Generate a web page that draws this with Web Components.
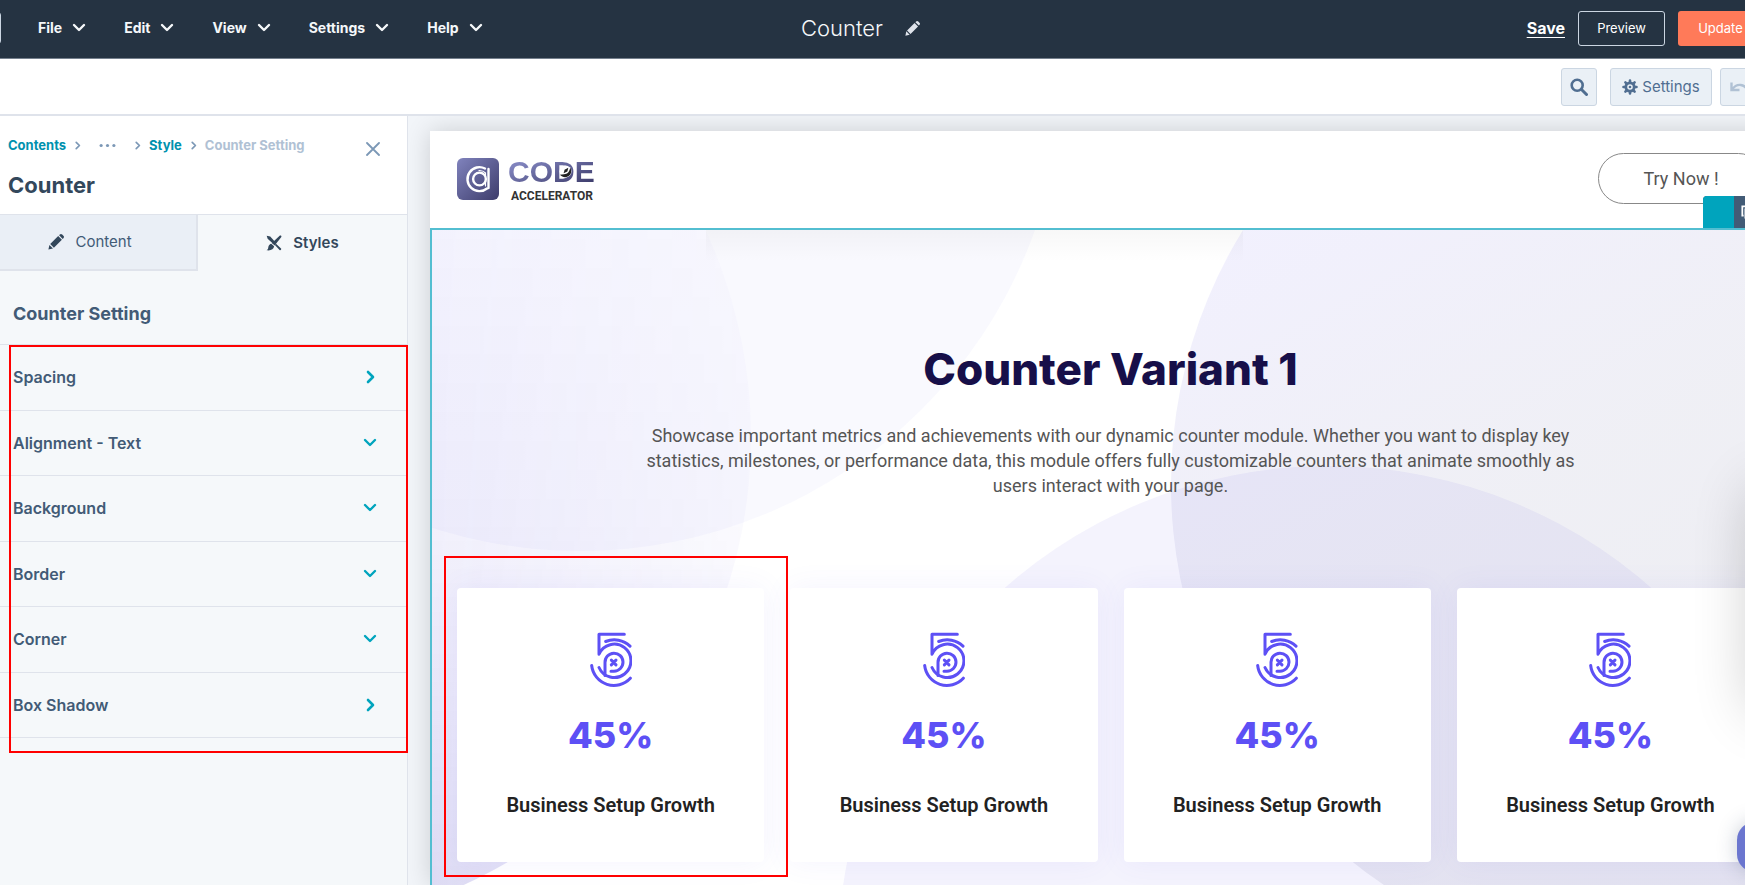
<!DOCTYPE html>
<html lang="en">
<head>
<meta charset="utf-8">
<title>Counter</title>
<style>
    html, body { margin:0; height:100% }
    body {
        font-family: Inter, "Liberation Sans", sans-serif;
        color: #33475b;
        overflow: hidden;
    }
    editor-app { height: 100vh }
</style>
</head>
<body>

<editor-app>
    <editor-navbar slot="navbar" page-name="Counter">
        <nav-menu>File</nav-menu>
        <nav-menu>Edit</nav-menu>
        <nav-menu>View</nav-menu>
        <nav-menu>Settings</nav-menu>
        <nav-menu>Help</nav-menu>
    </editor-navbar>

    <editor-toolbar slot="toolbar"></editor-toolbar>

    <module-sidebar slot="sidebar" heading="Counter" section="Counter Setting">
        <setting-row icon="right">Spacing</setting-row>
        <setting-row icon="down">Alignment - Text</setting-row>
        <setting-row icon="down">Background</setting-row>
        <setting-row icon="down">Border</setting-row>
        <setting-row icon="down">Corner</setting-row>
        <setting-row icon="right">Box Shadow</setting-row>
    </module-sidebar>

    <site-preview>
        <site-header slot="header"></site-header>
        <counter-section heading="Counter Variant 1">
            <span slot="text">Showcase important metrics and achievements with our dynamic counter module. Whether you want to display key statistics, milestones, or performance data, this module offers fully customizable counters that animate smoothly as users interact with your page.</span>
            <counter-card value="45%" marked>Business Setup Growth</counter-card>
            <counter-card value="45%">Business Setup Growth</counter-card>
            <counter-card value="45%">Business Setup Growth</counter-card>
            <counter-card value="45%">Business Setup Growth</counter-card>
        </counter-section>
    </site-preview>
</editor-app>

<script>
const ICONS = {
    down: '<svg viewBox="0 0 14 14"><path d="M2 4l5 5 5-5" fill="none" stroke="currentColor" stroke-width="2.4" stroke-linecap="round" stroke-linejoin="round"/></svg>',
    right: '<svg viewBox="0 0 14 14"><path d="M5 2l5 5-5 5" fill="none" stroke="currentColor" stroke-width="2.6" stroke-linecap="round" stroke-linejoin="round"/></svg>',
    close: '<svg viewBox="0 0 14 14"><path d="M1 1l12 12M13 1L1 13" fill="none" stroke="currentColor" stroke-width="1.8" stroke-linecap="round"/></svg>',
    dots: '<svg viewBox="0 0 16 16"><g fill="currentColor"><circle cx="2" cy="8" r="1.5"/><circle cx="8" cy="8" r="1.5"/><circle cx="14" cy="8" r="1.5"/></g></svg>',
    pencil: '<svg viewBox="0 0 16 16"><path d="M0.4 15.6l1-4.6 3.6 3.6zM2.2 10.1L10.2 2.1l3.7 3.7-8 8zM11.1 1.3l.7-.7c.8-.8 1.7-.7 2.4 0l1.2 1.2c.8.8.8 1.6 0 2.4l-.7.7z" fill="currentColor"/></svg>',
    brush: '<svg viewBox="0 0 17 17"><g fill="currentColor"><path d="M.7.7l3.8 1 5 5.6-2 2L1.8 4z"/><path d="M10.6 9.2l5.4 5.2c.7 1-.6 2.2-1.6 1.5L9.4 10.5z"/><path d="M14.8.6c1-.5 2 .4 1.5 1.5L9.2 11.2 6.3 8.5z"/><path d="M5.6 9.2l3 2.8c-.3 3.6-3.6 4.8-8 4.2 2-.9 1.5-2.2 2-4 .5-1.7 1.6-2.7 3-3z"/></g></svg>',
    search: '<svg viewBox="0 0 18 18"><circle cx="7.2" cy="7.2" r="5.5" fill="none" stroke="currentColor" stroke-width="2.6"/><path d="M11.5 11.5l5 5" stroke="currentColor" stroke-width="3" stroke-linecap="round"/></svg>',
    gear: '<svg viewBox="0 0 16 16"><circle cx="8" cy="8" r="4.2" fill="none" stroke="currentColor" stroke-width="2.8"/><circle cx="8" cy="8" r="1.3" fill="currentColor"/><path d="M8 1.5v2M8 12.5v2M1.5 8h2M12.5 8h2M3.4 3.4l1.4 1.4M11.2 11.2l1.4 1.4M3.4 12.6l1.4-1.4M11.2 4.8l1.4-1.4" stroke="currentColor" stroke-width="2.6" stroke-linecap="round"/></svg>',
    undo: '<svg viewBox="0 0 20 14"><path d="M1.5 2.5v7.5h8M2 9.5c5-7 13-6 16.5 2.5" fill="none" stroke="currentColor" stroke-width="2.4"/></svg>',
    copy: '<svg viewBox="0 0 16 16"><g fill="none" stroke="currentColor" stroke-width="2"><path d="M3 12H1.5V1.5H11V3"/><rect x="5" y="5" width="9.5" height="9.5"/></g></svg>',
    counter: '<svg viewBox="0 0 126 164"><g fill="none" stroke="currentColor" stroke-width="9" stroke-linecap="round" stroke-linejoin="round"><path d="M103 6H27V66A50 50 0 1 1 27 106"/><path d="M45 130V91A27 27 0 1 1 72 117H63"/><path d="M47 28A68 68 0 0 1 120 42M5 100A67 67 0 0 0 121 138"/><path d="M64 84l14 14M78 84l-14 14"/></g></svg>',
    logo: '<svg viewBox="0 0 42 42"><defs><linearGradient id="lg" x1="0" y1="0" x2="1" y2="1"><stop offset="0" stop-color="#8083bd"/><stop offset="1" stop-color="#3d3c6b"/></linearGradient></defs><rect width="42" height="42" rx="6" fill="url(#lg)"/><g fill="none" stroke="#fff" stroke-linecap="round"><path d="M28 10.5A12 12 0 1 0 30 30.5" stroke-width="2.4"/><path d="M31.5 11V30" stroke-width="2.4"/><circle cx="22.5" cy="21" r="6.4" stroke-width="2.4"/><path d="M28.5 15V28M28.5 15A8.5 8.5 0 0 0 22 12.5" stroke-width="1.2"/></g></svg>',
    rocket: '<svg viewBox="0 0 14 14"><circle cx="7" cy="7" r="6.5" fill="#fff"/><path d="M1 10.5C4 14 9 14 12 10.5 14 8 13 4 12 3c-.5 4-3 7-6.500 7z" fill="#222"/><path d="M5 9l1-4 4-2-1 4z" fill="#222"/></svg>'
};

class UiIcon extends HTMLElement {
    connectedCallback() {
        this.attachShadow({ mode: 'open' });
        this.shadowRoot.innerHTML = `
            <style>
                :host { display:inline-block; width:14px; height:14px; flex:none }
                svg { display:block; width:100%; height:100% }
            </style>
            ${ICONS[this.getAttribute('name')]}
        `;
    }
}
customElements.define('ui-icon', UiIcon);

class EditorApp extends HTMLElement {
    connectedCallback() {
        this.attachShadow({ mode: 'open' });
        this.shadowRoot.innerHTML = `
            <style>
                :host {
                    display: flex;
                    flex-direction: column;
                    position: relative;
                    overflow: hidden;
                    background: #fff;
                }
                .main {
                    flex: 1;
                    min-height: 0;
                    display: grid;
                    grid-template-columns: 408px minmax(0, 1fr);
                }
                /* panel docked past the right edge, only its shadow shows */
                .dock {
                    position: absolute;
                    right: -60px;
                    top: 490px;
                    width: 50px;
                    height: 220px;
                    border-radius: 8px;
                    box-shadow: 0 0 60px rgba(0,0,0,.24);
                }
                .chat {
                    position: absolute;
                    right: -42px;
                    bottom: 13px;
                    width: 50px;
                    height: 50px;
                    padding: 0;
                    border: none;
                    border-radius: 18px;
                    background: #6b76cf;
                    box-shadow: 0 0 20px rgba(40,60,90,.25);
                }
            </style>
            <slot name="navbar"></slot>
            <slot name="toolbar"></slot>
            <div class="main">
                <slot name="sidebar"></slot>
                <slot></slot>
            </div>
            <div class="dock"></div>
            <button class="chat" aria-label="Chat"></button>
        `;
    }
}
customElements.define('editor-app', EditorApp);

class NavMenu extends HTMLElement {
    connectedCallback() {
        this.attachShadow({ mode: 'open' });
        this.shadowRoot.innerHTML = `
            <style>
                :host { display:block }
                button {
                    display: flex;
                    align-items: center;
                    gap: 10px;
                    padding: 0;
                    border: none;
                    background: none;
                    color: #f5f8fa;
                    font: 700 14px/20px Inter, sans-serif;
                    cursor: pointer;
                }
            </style>
            <button><slot></slot><ui-icon name="down"></ui-icon></button>
        `;
    }
}
customElements.define('nav-menu', NavMenu);

class EditorNavbar extends HTMLElement {
    connectedCallback() {
        this.attachShadow({ mode: 'open' });
        this.shadowRoot.innerHTML = `
            <style>
                :host {
                    display: grid;
                    grid-template-columns: 1fr auto 1fr;
                    align-items: center;
                    height: 56px;
                    padding: 0 24px 2px 0;
                    border-bottom: 1px solid #75808d;
                    background: #253342;
                    color: #f5f8fa;
                }
                nav { display:flex; align-items:center; gap:38px }
                .exit {
                    width: 37px;
                    height: 32px;
                    margin: 0 -1px 0 -36px;
                    padding: 0;
                    border: 1px solid #cbd6e2;
                    border-radius: 3px;
                    background: none;
                }
                .title { display:flex; align-items:center; gap:22px }
                h1 { margin:0; font-weight:300; font-size:22px; line-height:28px }
                .title ui-icon { width:15px; height:15px; color:#dfe3eb }
                .actions {
                    justify-self: end;
                    display: flex;
                    align-items: center;
                    gap: 13px;
                    margin-right: -42px;
                }
                a { color:#fff; font-weight:700; font-size:16px; text-underline-offset:3px }
                button {
                    height: 35px;
                    border-radius: 3px;
                    font: 400 13px/20px Inter, sans-serif;
                    color: #fff;
                    cursor: pointer;
                }
                .preview { width:87px; padding:0; border:1px solid #cbd6e2; background:none }
                .update { width:85px; padding:0; border:none; background:#ff7a59 }
            </style>
            <nav>
                <button class="exit" aria-label="Exit"></button>
                <slot></slot>
            </nav>
            <div class="title">
                <h1>${this.getAttribute('page-name')}</h1>
                <ui-icon name="pencil"></ui-icon>
            </div>
            <div class="actions">
                <a href="#save">Save</a>
                <button class="preview">Preview</button>
                <button class="update">Update</button>
            </div>
        `;
    }
}
customElements.define('editor-navbar', EditorNavbar);

class EditorToolbar extends HTMLElement {
    connectedCallback() {
        this.attachShadow({ mode: 'open' });
        this.shadowRoot.innerHTML = `
            <style>
                :host {
                    display: flex;
                    justify-content: flex-end;
                    align-items: center;
                    height: 55px;
                    border-bottom: 2px solid #dfe3eb;
                }
                button {
                    display: flex;
                    align-items: center;
                    justify-content: center;
                    gap: 4px;
                    height: 38px;
                    padding: 0 8px;
                    border: 1px solid #cbd6e2;
                    border-radius: 3px;
                    background: #eaf0f6;
                    color: #506e91;
                    font: 400 15px/20px Inter, sans-serif;
                    cursor: pointer;
                }
                .search { width:36px; margin-right:13px }
                .search ui-icon { width:18px; height:18px }
                .settings { width:102px; margin-right:8px }
                .settings ui-icon { width:16px; height:16px }
                .undo { width:39px; margin-right:-14px; color:#b0c1d4 }
                .undo ui-icon { width:20px }
            </style>
            <button class="search" aria-label="Search"><ui-icon name="search"></ui-icon></button>
            <button class="settings"><ui-icon name="gear"></ui-icon>Settings</button>
            <button class="undo" aria-label="Undo"><ui-icon name="undo"></ui-icon></button>
        `;
    }
}
customElements.define('editor-toolbar', EditorToolbar);

class SettingRow extends HTMLElement {
    connectedCallback() {
        this.attachShadow({ mode: 'open' });
        this.shadowRoot.innerHTML = `
            <style>
                :host { display:block; border-bottom:1px solid #dfe3eb }
                button {
                    display: flex;
                    align-items: center;
                    justify-content: space-between;
                    width: 100%;
                    height: 100%;
                    padding: 0 30px 0 13px;
                    border: none;
                    background: none;
                    color: #425b76;
                    font: 600 16px/20px Inter, sans-serif;
                    cursor: pointer;
                }
                ui-icon { color:#00a4bd }
            </style>
            <button><slot></slot><ui-icon name="${this.getAttribute('icon')}"></ui-icon></button>
        `;
    }
}
customElements.define('setting-row', SettingRow);

class ModuleSidebar extends HTMLElement {
    connectedCallback() {
        this.attachShadow({ mode: 'open' });
        this.shadowRoot.innerHTML = `
            <style>
                :host {
                    display: block;
                    border-right: 1px solid #dfe3eb;
                    background: #f5f8fa;
                }
                .head {
                    display: flex;
                    justify-content: space-between;
                    height: 98px;
                    padding: 0 27px 0 8px;
                    border-bottom: 1px solid #dfe3eb;
                    background: #fff;
                }
                .crumbs {
                    display: flex;
                    align-items: center;
                    height: 20px;
                    margin-top: 19px;
                    font-weight: 700;
                    font-size: 13px;
                    line-height: 20px;
                    color: #b0c1d4;
                }
                .crumbs a { color:#0091ae; text-decoration:none }
                .crumbs ui-icon { width:9px; height:9px; margin:0 7px; color:#7c98b6 }
                .crumbs .dots { width:17px; height:17px; margin:0 10px }
                h2 { margin:15px 0 0; font-weight:700; font-size:22px; line-height:30px }
                .close {
                    width: 14px;
                    height: 14px;
                    margin-top: 26px;
                    padding: 0;
                    border: none;
                    background: none;
                    color: #7c98b6;
                }
                .tabs { display:grid; grid-template-columns:198px 1fr; height:56px }
                .tabs button {
                    display: flex;
                    align-items: center;
                    justify-content: center;
                    gap: 11px;
                    padding: 0;
                    border: none;
                    background: none;
                    font: 400 15px/20px Inter, sans-serif;
                    color: #425b76;
                }
                .tabs .idle {
                    padding-right: 16px;
                    border-right: 2px solid #dfe3eb;
                    border-bottom: 2px solid #dfe3eb;
                    background: #eaeff6;
                }
                .tabs .active { font-weight:600; color:#33475b }
                .tabs ui-icon { width:16px; height:16px; color:#33475b }
                h3 { margin:0; padding:30px 13px 17px; font-weight:700; font-size:18px; line-height:26px; color:#425b76 }
                .rows {
                    position: relative;
                    display: grid;
                    grid-auto-rows: 1fr;
                    height: 394px;
                    box-sizing: border-box;
                    border-top: 1px solid #dfe3eb;
                }
                .mark {
                    position: absolute;
                    inset: 0 -1px -15px 9px;
                    border: 2px solid #f00;
                    pointer-events: none;
                }
            </style>
            <div class="head">
                <div>
                    <div class="crumbs">
                        <a href="#contents">Contents</a>
                        <ui-icon name="right"></ui-icon>
                        <ui-icon class="dots" name="dots"></ui-icon>
                        <ui-icon name="right"></ui-icon>
                        <a href="#style">Style</a>
                        <ui-icon name="right"></ui-icon>
                        <span>${this.getAttribute('section')}</span>
                    </div>
                    <h2>${this.getAttribute('heading')}</h2>
                </div>
                <button class="close" aria-label="Close"><ui-icon name="close"></ui-icon></button>
            </div>
            <div class="tabs">
                <button class="idle"><ui-icon name="pencil"></ui-icon>Content</button>
                <button class="active"><ui-icon name="brush"></ui-icon>Styles</button>
            </div>
            <h3>${this.getAttribute('section')}</h3>
            <div class="rows">
                <slot></slot>
                <div class="mark"></div>
            </div>
        `;
    }
}
customElements.define('module-sidebar', ModuleSidebar);

class SitePreview extends HTMLElement {
    connectedCallback() {
        this.attachShadow({ mode: 'open' });
        this.shadowRoot.innerHTML = `
            <style>
                :host {
                    display: block;
                    padding: 15px 0 0 22px;
                    background: #f2f5f9;
                    overflow: hidden;
                }
                .page {
                    display: flex;
                    flex-direction: column;
                    height: 100%;
                    margin-right: -45px;
                    background: #fff;
                    box-shadow: 0 0 24px rgba(0,0,0,.16);
                }
                ::slotted(counter-section) { flex:1 }
            </style>
            <div class="page">
                <slot name="header"></slot>
                <slot></slot>
            </div>
        `;
    }
}
customElements.define('site-preview', SitePreview);

class SiteHeader extends HTMLElement {
    connectedCallback() {
        this.attachShadow({ mode: 'open' });
        this.shadowRoot.innerHTML = `
            <style>
                :host {
                    display: flex;
                    align-items: center;
                    justify-content: space-between;
                    position: relative;
                    height: 97px;
                    padding: 0 26px 2px 27px;
                    box-sizing: border-box;
                }
                .logo { display:flex; align-items:center; gap:9px; color:inherit; text-decoration:none }
                .logo > ui-icon { width:42px; height:42px }
                .name { position:relative; display:flex; flex-direction:column }
                .name b {
                    font: 700 30px/34px "Liberation Sans", Arial, sans-serif;
                    color: transparent;
                    background: linear-gradient(160deg, #8083bd 20%, #3d3c6b 90%);
                    -webkit-background-clip: text;
                    background-clip: text;
                }
                .name small {
                    padding-left: 3px;
                    font: 700 12px/14px Roboto, sans-serif;
                    color: #333;
                }
                .name ui-icon { position:absolute; left:51px; top:10px; width:13px; height:13px }
                .cta {
                    width: 166px;
                    height: 51px;
                    padding: 0;
                    border: 1px solid #888;
                    border-radius: 26px;
                    background: none;
                    font: 400 18px/24px Roboto, sans-serif;
                    color: #555;
                }
                .tools {
                    position: absolute;
                    right: 0;
                    bottom: 0;
                    display: flex;
                    width: 87px;
                    height: 32px;
                    border-radius: 4px 4px 0 0;
                    overflow: hidden;
                    background: #425b76;
                    color: #fff;
                }
                .tools span { width:31px; margin-right:7px; background:#00a4bd }
                .tools ui-icon { margin-top:9px }
            </style>
            <a class="logo" href="#home">
                <ui-icon name="logo"></ui-icon>
                <span class="name">
                    <b>CODE</b>
                    <small>ACCELERATOR</small>
                    <ui-icon name="rocket"></ui-icon>
                </span>
            </a>
            <button class="cta">Try Now !</button>
            <div class="tools"><span></span><ui-icon name="copy"></ui-icon></div>
        `;
    }
}
customElements.define('site-header', SiteHeader);

class CounterSection extends HTMLElement {
    connectedCallback() {
        this.attachShadow({ mode: 'open' });
        this.shadowRoot.innerHTML = `
            <style>
                :host {
                    display: block;
                    position: relative;
                    border: solid #53bed1;
                    border-width: 2px 0 0 2px;
                    overflow: hidden;
                    text-align: center;
                }
                .backdrop {
                    position: absolute;
                    left: 0;
                    top: 0;
                    width: 100%;
                    height: auto;
                    min-height: 100%;
                }
                .inner { position:relative; padding:109px 26px 0 25px }
                h2 { margin:0; font-weight:800; font-size:44px; line-height:60px; color:#170f49 }
                p {
                    max-width: 940px;
                    margin: 24px auto 90px;
                    font: 400 18px/25px Roboto, sans-serif;
                    color: #555;
                }
                .cards { display:grid; grid-template-columns:repeat(4, 1fr); gap:26px }
            </style>
            <svg class="backdrop" viewBox="432 230 1358 656" preserveAspectRatio="xMinYMin slice">
                <defs>
                    <linearGradient id="b" x1="0" y1="230" x2="0" y2="886" gradientUnits="userSpaceOnUse">
                        <stop offset="0" stop-color="#5d50f0" stop-opacity=".04"/>
                        <stop offset=".45" stop-color="#5546d8" stop-opacity=".08"/>
                        <stop offset="1" stop-color="#4436c0" stop-opacity=".18"/>
                    </linearGradient>
                    <linearGradient id="bx" x1="432" y1="0" x2="752" y2="0" gradientUnits="userSpaceOnUse">
                        <stop offset="0" stop-color="#fff"/>
                        <stop offset="1" stop-color="#555"/>
                    </linearGradient>
                    <mask id="m"><rect x="432" y="230" width="1358" height="656" fill="url(#bx)"/></mask>
                    <linearGradient id="c" x1="1250" y1="230" x2="1600" y2="880" gradientUnits="userSpaceOnUse">
                        <stop offset="0" stop-color="#6a5cf0" stop-opacity=".09"/>
                        <stop offset=".5" stop-color="#3a3c80" stop-opacity=".08"/>
                        <stop offset="1" stop-color="#343670" stop-opacity=".09"/>
                    </linearGradient>
                    <linearGradient id="t" x1="0" y1="230" x2="0" y2="262" gradientUnits="userSpaceOnUse">
                        <stop offset="0" stop-color="#000" stop-opacity=".03"/>
                        <stop offset="1" stop-color="#000" stop-opacity="0"/>
                    </linearGradient>
                </defs>
                <circle cx="580" cy="68" r="483" fill="#6c5cf0" fill-opacity=".04"/>
                <circle cx="258" cy="437" r="493" fill="url(#b)" mask="url(#m)"/>
                <circle cx="1655" cy="484" r="484" fill="url(#c)"/>
                <circle cx="1328" cy="956" r="490" fill="#5d4fe0" fill-opacity=".065"/>
                <rect x="706" y="230" width="537" height="32" fill="url(#t)"/>
            </svg>
            <div class="inner">
                <h2>${this.getAttribute('heading')}</h2>
                <p><slot name="text"></slot></p>
                <div class="cards"><slot></slot></div>
            </div>
        `;
    }
}
customElements.define('counter-section', CounterSection);

class CounterCard extends HTMLElement {
    connectedCallback() {
        this.attachShadow({ mode: 'open' });
        this.shadowRoot.innerHTML = `
            <style>
                :host {
                    display: flex;
                    flex-direction: column;
                    align-items: center;
                    position: relative;
                    padding: 44px 0;
                    border-radius: 4px;
                    background: #fff;
                    box-shadow: 0 0 30px rgba(93,79,240,.07);
                }
                ui-icon { width:42px; height:55px; color:#5d50f5 }
                strong { margin:24px 0 34px; font-weight:800; font-size:36px; line-height:48px; color:#5d50f5 }
                span { font:600 20px/25px Roboto, sans-serif; color:#222 }
                .mark {
                    display: none;
                    position: absolute;
                    inset: -32px -24px -15px -13px;
                    border: 2px solid #f00;
                    pointer-events: none;
                }
                :host([marked]) { z-index:1 }
                :host([marked]) .mark { display:block }
            </style>
            <ui-icon name="counter"></ui-icon>
            <strong>${this.getAttribute('value')}</strong>
            <span><slot></slot></span>
            <div class="mark"></div>
        `;
    }
}
customElements.define('counter-card', CounterCard);
</script>
</body>
</html>
